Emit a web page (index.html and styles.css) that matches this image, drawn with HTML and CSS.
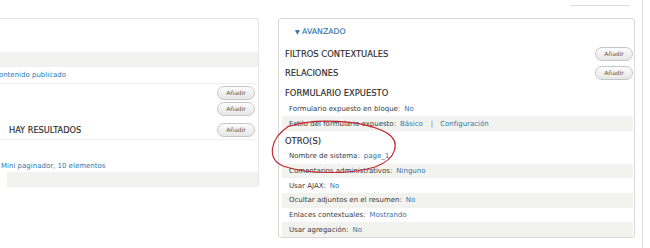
FILE: index.html
```html
<!DOCTYPE html>
<html lang="es">
<head>
<meta charset="utf-8">
<title>Vista - Avanzado</title>
<link rel="stylesheet" href="styles.css">
</head>
<body>
<div class="page">
  <div class="content">
    <div class="topbar"><div class="tab"></div></div>
    <div class="main">
      <section class="col-left">
        <div class="spacer-a"></div>
        <div class="lrow stripe"></div>
        <div class="lrow sep"><a class="link cut">Contenido publicado</a></div>
        <div class="lhead h1"><span class="ltitle"></span><button class="btn">Añadir</button></div>
        <div class="lhead h2"><span class="ltitle"></span><button class="btn">Añadir</button></div>
        <div class="lhead h3 sep"><span class="ltitle">HAY RESULTADOS</span><button class="btn">Añadir</button></div>
        <div class="spacer-b"></div>
        <div class="lrow pager"><a class="link">Mini paginador, 10 elementos</a></div>
        <div class="lrow stripe inset"></div>
      </section>
      <section class="col-right">
        <div class="legend"><span class="tri">▼</span> AVANZADO</div>
        <div class="bucket-head"><h3>FILTROS CONTEXTUALES</h3><button class="btn">Añadir</button></div>
        <div class="bucket-head"><h3>RELACIONES</h3><button class="btn">Añadir</button></div>
        <div class="bucket-head low"><h3>FORMULARIO EXPUESTO</h3></div>
        <div class="row"><span class="label">Formulario expuesto en bloque:</span><a class="link">No</a></div>
        <div class="row stripe"><span class="label">Estilo del formulario expuesto:</span><a class="link">Básico</a><span class="pipe">|</span><a class="link">Configuración</a></div>
        <div class="bucket-head other"><h3>OTRO(S)</h3></div>
        <div class="row r2"><span class="label">Nombre de sistema:</span><a class="link">page_1</a></div>
        <div class="row r2 stripe"><span class="label">Comentarios administrativos:</span><a class="link">Ninguno</a></div>
        <div class="row r2"><span class="label">Usar AJAX:</span><a class="link">No</a></div>
        <div class="row r2 stripe"><span class="label">Ocultar adjuntos en el resumen:</span><a class="link">No</a></div>
        <div class="row r2"><span class="label">Enlaces contextuales:</span><a class="link">Mostrando</a></div>
        <div class="row r2 stripe"><span class="label">Usar agregación:</span><a class="link">No</a></div>
      </section>
    </div>
  </div>
  <div class="rail"></div>
  <svg class="annotation" width="140" height="64" viewBox="0 0 140 64" aria-hidden="true">
    <path d="M 20 10 C 45 1, 95 2, 120 16 C 134 25, 130 42, 108 50 C 82 58, 38 57, 16 49 C 0 42, 2 22, 22 9" fill="none" stroke="#c3262f" stroke-width="1.15" stroke-linecap="round"/>
  </svg>
</div>
</body>
</html>
```

FILE: styles.css
```css
html, body {
  margin: 0;
  padding: 0;
  background: #fff;
}

body {
  width: 650px;
  height: 248px;
  overflow: hidden;
  font-family: "DejaVu Sans", "Liberation Sans", sans-serif;
  color: #333;
}

.page {
  position: relative;
  display: flex;
  width: 650px;
  height: 248px;
  overflow: hidden;
}

.content {
  width: 642px;
  flex: none;
  display: flex;
  flex-direction: column;
}

.rail {
  flex: 1;
  border-left: 1px solid #dedede;
}

.topbar {
  height: 18px;
  display: flex;
}

.tab {
  margin-left: auto;
  margin-right: 12px;
  width: 60px;
  height: 5px;
  border-bottom: 1px solid #dcdcdc;
}

.main {
  display: flex;
  align-items: flex-start;
}

/* ---------- left (cut-off) column ---------- */
.col-left {
  box-sizing: border-box;
  width: 261px;
  margin-left: -2px;
  border: 1px solid #e6e6e6;
  border-bottom: none;
  border-radius: 0 3px 0 0;
  display: flex;
  flex-direction: column;
}

.spacer-a { height: 33px; }
.spacer-b { height: 19px; }

.lrow {
  height: 15px;
  display: flex;
  align-items: center;
  font-size: 7px;
  white-space: nowrap;
}

.lrow.sep {
  height: 16px;
  border-bottom: 1px solid #efefef;
}

.lrow.pager { height: 13px; padding-left: 2px; }

.stripe { background: #f2f3ee; }

.lrow.inset { margin-left: 8px; }

.cut { margin-left: -5px; }

.lhead {
  display: flex;
  align-items: center;
  justify-content: space-between;
  padding: 0 3px 0 10px;
}

.lhead.h1 { height: 17px; }
.lhead.h2 { height: 16px; margin-bottom: 4px; }
.lhead.h3 { height: 18px; border-bottom: 1px solid #efefef; }

.ltitle {
  font-size: 8.2px;
  color: #2b2b2b;
  -webkit-text-stroke: 0.15px #2b2b2b;
}

/* ---------- right column ---------- */
.col-right {
  box-sizing: border-box;
  width: 357px;
  margin-left: 19px;
  border: 1px solid #d9d9d9;
  border-radius: 3px;
  display: flex;
  flex-direction: column;
}

.legend {
  height: 25px;
  display: flex;
  align-items: center;
  padding-left: 16px;
  font-size: 7.8px;
  color: #2a72ad;
  white-space: pre;
  -webkit-text-stroke: 0.1px #2a72ad;
}

.tri {
  font-size: 6px;
}

.bucket-head {
  height: 19px;
  display: flex;
  align-items: center;
  justify-content: space-between;
  padding: 0 1px 0 6px;
}

.bucket-head.low {
  box-sizing: border-box;
  padding-top: 3px;
}

.bucket-head.other {
  box-sizing: border-box;
  height: 18px;
  padding-top: 2px;
}

.bucket-head h3 {
  margin: 0;
  font-size: 8.4px;
  font-weight: normal;
  color: #2b2b2b;
  -webkit-text-stroke: 0.15px #2b2b2b;
}

.row {
  height: 15px;
  margin: 0 1px 0 3px;
  padding-left: 7px;
  display: flex;
  align-items: center;
  font-size: 7px;
  color: #3a3a3a;
  white-space: pre;
}

.row.r2 { height: 14.7px; }

.label { margin-right: 4px; }

.link {
  color: #2e76b0;
  text-decoration: none;
}

.pipe {
  color: #777;
  margin: 0 7px 0 8px;
}

.btn {
  box-sizing: border-box;
  width: 38px;
  height: 14px;
  padding: 0;
  border: 1px solid #c6c6c6;
  border-radius: 7px;
  background: linear-gradient(#fdfdfd, #e6e6e6);
  font-family: "DejaVu Sans", "Liberation Sans", sans-serif;
  font-size: 6px;
  color: #555;
  line-height: 12px;
  text-align: center;
}

/* hand-drawn annotation over the "Otro(s)" block */
.annotation {
  position: absolute;
  left: 267px;
  top: 117px;
  overflow: visible;
}
```
